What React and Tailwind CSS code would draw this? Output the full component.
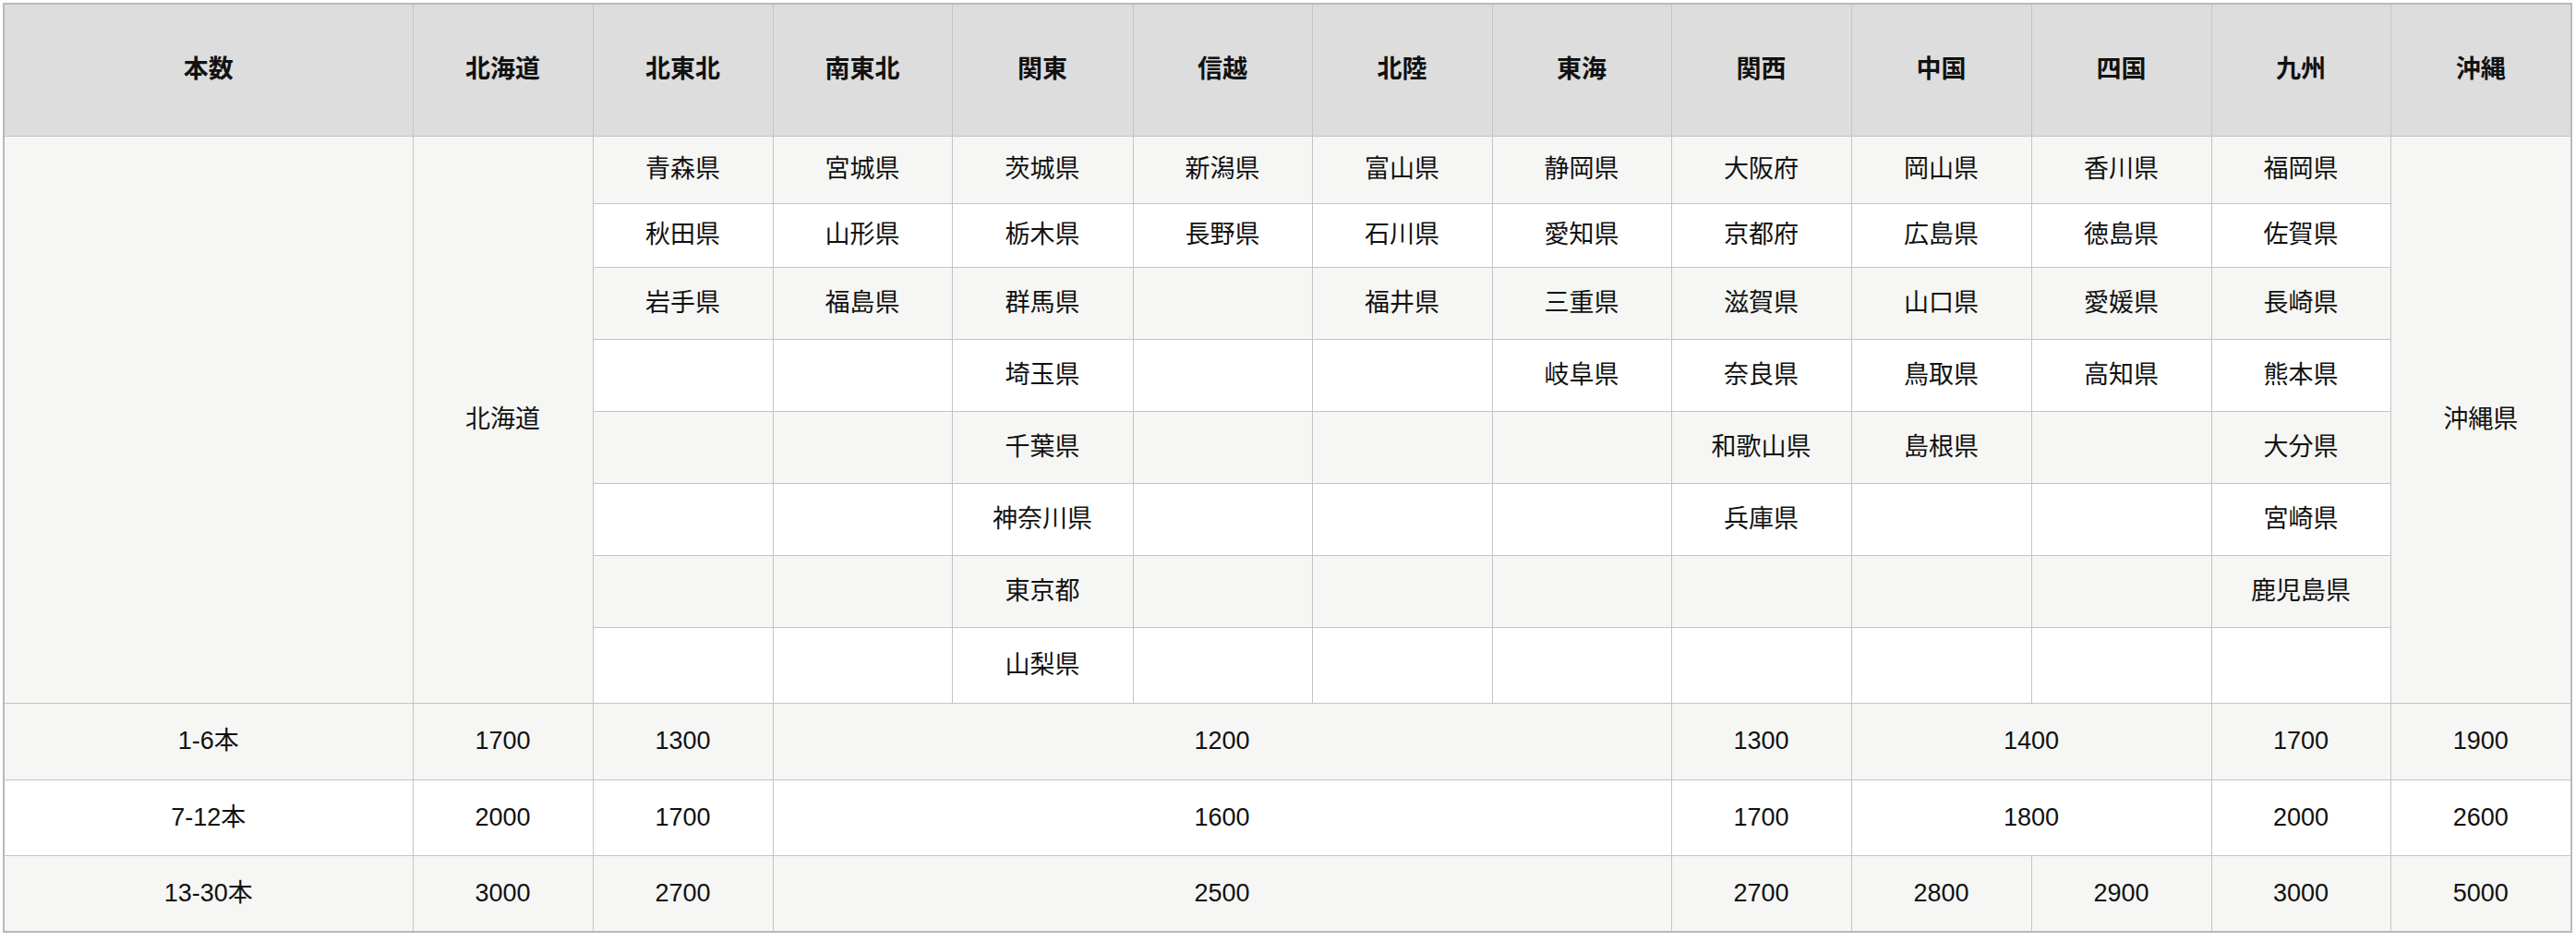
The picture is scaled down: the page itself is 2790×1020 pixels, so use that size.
import React from 'react';

const columns = ['北海道', '北東北', '南東北', '関東', '信越', '北陸', '東海', '関西', '中国', '四国', '九州', '沖縄'];
const colWidths = [443, 195, 195, 194, 196, 194, 195, 194, 195, 195, 195, 194, 196];

// prefectures per region, columns 北東北..九州, top to bottom
const regions = [
  ['青森県', '秋田県', '岩手県'],
  ['宮城県', '山形県', '福島県'],
  ['茨城県', '栃木県', '群馬県', '埼玉県', '千葉県', '神奈川県', '東京都', '山梨県'],
  ['新潟県', '長野県'],
  ['富山県', '石川県', '福井県'],
  ['静岡県', '愛知県', '三重県', '岐阜県'],
  ['大阪府', '京都府', '滋賀県', '奈良県', '和歌山県', '兵庫県'],
  ['岡山県', '広島県', '山口県', '鳥取県', '島根県'],
  ['香川県', '徳島県', '愛媛県', '高知県'],
  ['福岡県', '佐賀県', '長崎県', '熊本県', '大分県', '宮崎県', '鹿児島県'],
];

const rowHeights = ['h-[73px]', 'h-[69px]', 'h-[78px]', 'h-[78px]', 'h-[78px]', 'h-[78px]', 'h-[78px]', 'h-[82px]'];

const prices = [
  { label: '1-6本', cells: [['1700', 1], ['1300', 1], ['1200', 5], ['1300', 1], ['1400', 2], ['1700', 1], ['1900', 1]], h: 'h-[83px]' },
  { label: '7-12本', cells: [['2000', 1], ['1700', 1], ['1600', 5], ['1700', 1], ['1800', 2], ['2000', 1], ['2600', 1]], h: 'h-[82px]' },
  { label: '13-30本', cells: [['3000', 1], ['2700', 1], ['2500', 5], ['2700', 1], ['2800', 1], ['2900', 1], ['3000', 1], ['5000', 1]], h: 'h-[83px]' },
];

const cell = 'border border-[#c4c4c4] text-center align-middle p-0';
const stripe = (i) => (i % 2 === 0 ? 'bg-[#f6f6f4]' : 'bg-white');

const App = () => {
  return (
    <div className="w-[2790px] h-[1020px] bg-white pt-[3px] pl-[3px]">
      <table className="table-fixed border-collapse border-2 border-[#b9b9b9] w-[2781px] text-[27px] leading-none text-[#111] font-['Liberation_Sans','Noto_Sans_CJK_JP',sans-serif]">
        <colgroup>
          {colWidths.map((w, i) => (
            <col key={i} style={{ width: w }} />
          ))}
        </colgroup>
        <thead>
          <tr className="h-[143px] bg-[#dddddd]">
            <th className={`${cell} font-bold`}>本数</th>
            {columns.map((c) => (
              <th key={c} className={`${cell} font-bold`}>{c}</th>
            ))}
          </tr>
        </thead>
        <tbody>
          {rowHeights.map((h, r) => (
            <tr key={r} className={`${h} ${stripe(r)}`}>
              {r === 0 && (
                <>
                  <td rowSpan={8} className={`${cell} bg-[#f6f6f4]`} />
                  <td rowSpan={8} className={`${cell} bg-[#f6f6f4]`}>北海道</td>
                </>
              )}
              {regions.map((list, c) => (
                <td key={c} className={cell}>{list[r] || ''}</td>
              ))}
              {r === 0 && (
                <td rowSpan={8} className={`${cell} bg-[#f6f6f4]`}>沖縄県</td>
              )}
            </tr>
          ))}
          {prices.map((p, i) => (
            <tr key={p.label} className={`${p.h} ${stripe(i)}`}>
              <td className={cell}>{p.label}</td>
              {p.cells.map(([v, span], j) => (
                <td key={j} colSpan={span} className={cell}>{v}</td>
              ))}
            </tr>
          ))}
        </tbody>
      </table>
    </div>
  );
};

export default App;
